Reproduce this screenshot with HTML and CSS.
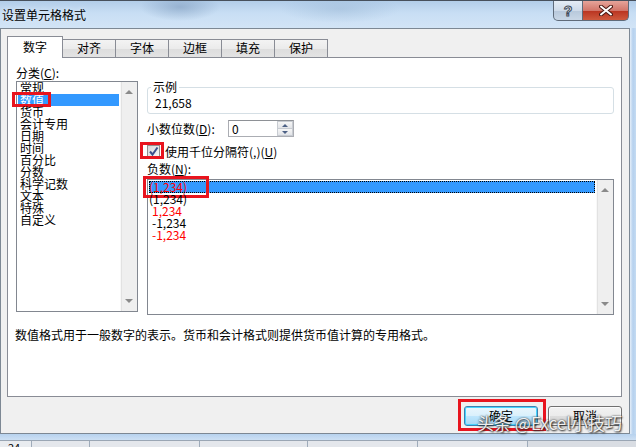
FILE: index.html
```html
<html>
<head>
<link rel="stylesheet" href="styles.css">
</head>
<body>
<div class="window">
  <div class="titlebar">
    <div class="title">设置单元格格式</div>
    <div class="capbtns">
      <div class="capbtn help"><span class="qmark">?</span></div>
      <div class="capbtn close">
        <svg width="14" height="11" viewBox="0 0 14 11"><path d="M2 1.5 L12 9.5 M12 1.5 L2 9.5" stroke="#4a1a14" stroke-width="4" stroke-linecap="round"/><path d="M2 1.5 L12 9.5 M12 1.5 L2 9.5" stroke="#ffffff" stroke-width="2" stroke-linecap="round"/></svg>
      </div>
    </div>
  </div>

  <div class="middle">
    <div class="dialog">
      <div class="tabs">
        <div class="tab active">数字</div>
        <div class="tab">对齐</div>
        <div class="tab">字体</div>
        <div class="tab">边框</div>
        <div class="tab">填充</div>
        <div class="tab">保护</div>
      </div>

      <div class="panel">
        <div class="cols">
          <div class="leftcol">
            <div class="lbl cat-label">分类(<u>C</u>):</div>
            <div class="listbox catlist">
              <div class="items">
                <div class="item">常规</div>
                <div class="item sel">数值<span class="mark mark-cat"></span></div>
                <div class="item">货币</div>
                <div class="item">会计专用</div>
                <div class="item">日期</div>
                <div class="item">时间</div>
                <div class="item">百分比</div>
                <div class="item">分数</div>
                <div class="item">科学记数</div>
                <div class="item">文本</div>
                <div class="item">特殊</div>
                <div class="item">自定义</div>
              </div>
              <div class="vscroll"><span class="arrow up"></span><span class="arrow down"></span></div>
            </div>
          </div>

          <div class="rightcol">
            <fieldset class="sample">
              <legend>示例</legend>
              <div class="sample-val">21,658</div>
            </fieldset>

            <div class="dec-row">
              <div class="lbl dec-label">小数位数(<u>D</u>):</div>
              <div class="spin">
                <span class="spin-val">0</span>
                <div class="spin-btns">
                  <span class="sbtn"><span class="arrow up blue"></span></span>
                  <span class="sbtn"><span class="arrow down blue"></span></span>
                </div>
              </div>
            </div>

            <div class="check-row">
              <span class="checkbox">
                <svg width="11" height="11" viewBox="0 0 11 11"><path d="M2 5.5 L4.5 8.5 L9.5 1.5" fill="none" stroke="#3b4f8c" stroke-width="2"/></svg>
                <span class="mark mark-check"></span>
              </span>
              <span class="lbl">使用千位分隔符(,)(<u>U</u>)</span>
            </div>

            <div class="lbl neg-label">负数(<u>N</u>):</div>
            <div class="listbox neglist">
              <div class="items">
                <div class="item sel focus red">(1,234)<span class="mark mark-neg"></span></div>
                <div class="item">(1,234)</div>
                <div class="item red indent">1,234</div>
                <div class="item indent">-1,234</div>
                <div class="item red indent">-1,234</div>
              </div>
              <div class="vscroll"><span class="arrow up"></span><span class="arrow down"></span></div>
            </div>
          </div>
        </div>

        <div class="desc">数值格式用于一般数字的表示。货币和会计格式则提供货币值计算的专用格式。</div>
      </div>

      <div class="buttons">
        <div class="btn default">确定<span class="mark mark-ok"></span></div>
        <div class="btn">取消</div>
      </div>
    </div>
    <div class="rframe"></div>
  </div>
  <div class="bframe"></div>
  <div class="sheet">
    <div class="cell rowhead">24</div>
    <div class="cell w58"></div>
    <div class="cell w110"></div>
    <div class="cell w108"></div>
    <div class="cell w110"></div>
    <div class="cell w110"></div>
  </div>

  <div class="watermark">头条 @Excel小技巧</div>
</div>
</body>
</html>
```

FILE: styles.css
```css
* {
    box-sizing: border-box;
}

body {
    margin: 0;
    width: 636px;
    height: 447px;
    overflow: hidden;
    background-color: #c4dbf2;
    font-family: "Noto Sans CJK SC", "Liberation Sans", sans-serif;
    font-size: 12px;
    line-height: 12px;
    color: #000;
}

u {
    text-decoration: underline;
}

.window {
    position: relative;
    width: 636px;
    height: 447px;
}

/* title bar */
.titlebar {
    height: 28px;
    display: flex;
    justify-content: space-between;
    border-top: 1px solid #47505c;
    background:
        radial-gradient(ellipse 40px 14px at 180px 6px, rgba(120,150,185,0.55), rgba(120,150,185,0)),
        radial-gradient(ellipse 60px 14px at 340px 8px, rgba(150,180,210,0.45), rgba(150,180,210,0)),
        linear-gradient(#b2cde9, #c8def4 45%, #d2e4f6);
}

.title {
    padding: 8px 0 0 2px;
    font-size: 12px;
    line-height: 12px;
    text-shadow: 0 0 4px #e6f0fa;
}

.capbtns {
    display: flex;
    margin-right: 7px;
    height: 20px;
}

.capbtn {
    height: 20px;
    border: 1px solid #5f6b7a;
    border-top: none;
    display: flex;
    align-items: center;
    justify-content: center;
}

.help {
    width: 30px;
    border-radius: 0 0 0 5px;
    background: linear-gradient(#e4ecf5, #cfdbe9 50%, #b7c8db 51%, #c9d7e6);
}

.qmark {
    font-family: "Liberation Sans", sans-serif;
    font-weight: bold;
    font-size: 14px;
    color: #fff;
    -webkit-text-stroke: 1px #3d4a5a;
}

.close {
    width: 46px;
    border-left: none;
    border-radius: 0 0 5px 0;
    background: linear-gradient(#e6a49a, #d2766a 50%, #b93320 51%, #cf5a3e);
}

/* dialog */
.middle {
    display: flex;
}

.dialog {
    width: 630px;
    height: 406px;
    border: 1px solid #7d8894;
    background-color: #f0f0f0;
}

.rframe {
    width: 6px;
    background: linear-gradient(90deg, #e4eef9, #b6d1ee 3px, #c4dbf2);
}

.bframe {
    height: 6px;
    background: linear-gradient(#b7d2ee, #cde0f4);
}

.tabs {
    display: flex;
    align-items: flex-end;
    height: 21px;
    margin: 7px 0 0 6px;
}

.tab {
    width: 54px;
    height: 18px;
    margin-left: -1px;
    border: 1px solid #898c95;
    border-bottom: none;
    background: linear-gradient(#f3f3f3, #ebebeb 50%, #dddddd 51%, #e3e3e3);
    text-align: center;
    line-height: 16px;
}

.tab.active {
    width: 56px;
    height: 22px;
    margin-left: 0;
    margin-bottom: -1px;
    background: #fff;
    line-height: 20px;
    position: relative;
    z-index: 1;
}

.panel {
    width: 615px;
    height: 340px;
    margin-left: 6px;
    border: 1px solid #898c95;
    background-color: #fff;
}

.cols {
    display: flex;
    align-items: flex-start;
}

.leftcol {
    width: 122px;
    margin-left: 8px;
}

.cat-label {
    margin-top: 9px;
}

.listbox {
    display: flex;
    border: 1px solid #828790;
    background: #fff;
}

.catlist {
    margin-top: 2px;
    height: 231px;
}

.items {
    flex: 1;
}

.neglist .items {
    padding-top: 1px;
}

.item {
    position: relative;
    height: 12px;
    margin: 0 1px;
    padding-left: 2px;
    line-height: 12px;
    white-space: nowrap;
}

.neglist .item {
    padding-left: 0;
}

.neglist .item.indent {
    padding-left: 3px;
}

.item.sel {
    background-color: #3399ff;
    color: #fff;
}

.item.red {
    color: #ff0000;
}

.item.focus {
    outline: 1px dotted #000;
    outline-offset: -1px;
}

.vscroll {
    width: 17px;
    display: flex;
    flex-direction: column;
    justify-content: space-between;
    align-items: center;
    padding: 8px 0;
    background: #efefef;
    border-left: 1px solid #f8f8f8;
    box-shadow: inset 1px 0 0 #e2e2e2;
}

.arrow {
    display: block;
    width: 0;
    height: 0;
    border-left: 4px solid transparent;
    border-right: 4px solid transparent;
}

.arrow.up {
    border-bottom: 4px solid #8a8a8a;
}

.arrow.down {
    border-top: 4px solid #8a8a8a;
}

.arrow.up.blue {
    border-left-width: 3px;
    border-right-width: 3px;
    border-bottom: 3px solid #4d6185;
}

.arrow.down.blue {
    border-left-width: 3px;
    border-right-width: 3px;
    border-top: 3px solid #4d6185;
}

/* right column */
.rightcol {
    width: 467px;
    margin-left: 9px;
}

.sample {
    margin: 23px 0 0 0;
    padding: 0 7px;
    height: 33px;
    border: 1px solid #d5dfe5;
    border-radius: 3px;
}

.sample legend {
    margin-left: -4px;
    padding: 0 2px;
    line-height: 12px;
}

.sample-val {
    padding-top: 4px;
}

.dec-row {
    display: flex;
    align-items: center;
    margin-top: 6px;
    height: 17px;
}

.dec-label {
    width: 81px;
}

.spin {
    display: flex;
    width: 66px;
    height: 17px;
    border: 1px solid #abadb3;
    border-top-color: #8e9196;
}

.spin-val {
    flex: 1;
    padding: 2px 0 0 3px;
}

.spin-btns {
    width: 16px;
    display: flex;
    flex-direction: column;
}

.sbtn {
    flex: 1;
    display: flex;
    align-items: center;
    justify-content: center;
    border: 1px solid #c8ccd2;
    background: linear-gradient(#f6f6f6, #e2e4e8);
}

.sbtn + .sbtn {
    border-top: none;
}

.check-row {
    display: flex;
    align-items: center;
    margin-top: 8px;
    height: 13px;
}

.checkbox {
    position: relative;
    width: 13px;
    height: 13px;
    margin-right: 5px;
    border: 1px solid #8e8f8f;
    background: linear-gradient(135deg, #d6d8db, #f7f7f7);
    display: flex;
    align-items: center;
    justify-content: center;
}

.neg-label {
    margin-top: 5px;
}

.neglist {
    margin-top: 4px;
    height: 136px;
}

.desc {
    margin: 14px 0 0 7px;
}

/* red highlight marks */
.mark {
    position: absolute;
    border: 3px solid #e8141e;
}

.mark-cat {
    left: -6px;
    top: -2px;
    width: 39px;
    height: 15px;
}

.mark-check {
    left: -8px;
    top: -4px;
    width: 24px;
    height: 17px;
}

.mark-neg {
    left: -6px;
    top: -5px;
    width: 66px;
    height: 22px;
}

.mark-ok {
    left: -7px;
    top: -8px;
    width: 88px;
    height: 32px;
}

/* buttons */
.buttons {
    display: flex;
    justify-content: flex-end;
    gap: 10px;
    width: 615px;
    margin: 9px 0 0 6px;
}

.btn {
    position: relative;
    width: 74px;
    height: 20px;
    border: 1px solid #707070;
    border-radius: 3px;
    background: linear-gradient(#f2f2f2, #ebebeb 50%, #dddddd 51%, #cfcfcf);
    box-shadow: inset 0 0 0 1px #fbfbfb;
    text-align: center;
    line-height: 18px;
}

.btn.default {
    border-color: #3c7fb1;
    background: linear-gradient(#eaf6fd, #d9f0fc 50%, #bee6fd 51%, #a7d9f5);
    box-shadow: inset 0 0 0 1px #48d4fd;
}

/* sheet behind */
.sheet {
    display: flex;
    height: 7px;
    background: #d9dde3;
    border-top: 1px solid #9aa6b4;
}

.cell {
    height: 7px;
    border-right: 1px solid #9eabba;
    background: #e4e7ec;
}

.rowhead {
    width: 32px;
    padding-left: 8px;
    font-size: 11px;
    line-height: 12px;
    overflow: hidden;
    background: #e9ecf0;
}

.w58 { width: 58px; }
.w110 { width: 110px; }
.w108 { width: 108px; }

.watermark {
    position: absolute;
    left: 477px;
    top: 413px;
    font-size: 17px;
    line-height: 20px;
    color: rgba(255,255,255,0.92);
    text-shadow: 0 0 2px #333, 1px 1px 2px #222;
    white-space: nowrap;
}
```
